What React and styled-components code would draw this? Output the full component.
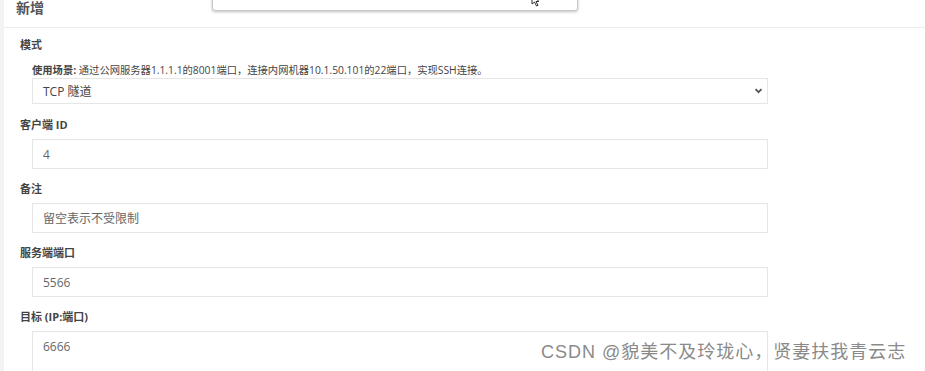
import React from "react";
import styled, { createGlobalStyle } from "styled-components";

const font = `"Open Sans", "Noto Sans CJK SC", sans-serif`;

const Global = createGlobalStyle`
  html, body { margin: 0; padding: 0; background: #fff; }
  body { font-family: ${font}; overflow: hidden; }
`;

const Page = styled.div`
  position: relative;
  width: 925px;
  height: 371px;
  overflow: hidden;
  border-left: 4px solid #f3f3f3;
  box-sizing: border-box;
  background: #fff;
`;

const Header = styled.div`
  height: 27px;
  padding-left: 12px;
  border-bottom: 1px solid #ececec;
  font-size: 14px;
  font-weight: 700;
  line-height: 16px;
  color: #555;
`;

const Form = styled.div`
  padding: 9px 0 0 16px;
`;

const Label = styled.div`
  font-size: 11px;
  font-weight: 700;
  line-height: 16px;
  color: #444;
  margin-bottom: ${(p) => p.$gap || 6}px;
`;

const Hint = styled.div`
  padding-left: 12px;
  font-size: 10.3px;
  line-height: 16px;
  color: #444;
  b { font-weight: 700; }
`;

const Group = styled.div`
  margin-bottom: ${(p) => p.$gap || 12}px;
`;

const Field = styled.div`
  margin-left: 12px;
  width: 736px;
  height: ${(p) => p.$h || 30}px;
  box-sizing: border-box;
  border: 1px solid #e6e6e6;
  padding: ${(p) => (p.$area ? "6px 10px" : "0 4px 0 10px")};
  display: flex;
  align-items: ${(p) => (p.$area ? "flex-start" : "center")};
  justify-content: space-between;
  font-size: 12px;
  color: ${(p) => (p.$dark ? "#444" : "#666")};
`;

const Popup = styled.div`
  position: absolute;
  left: 208px;
  top: -20px;
  width: 364px;
  height: 29px;
  background: #fff;
  border: 1px solid #c8c8c8;
  border-radius: 3px;
  box-shadow: 0 1px 3px rgba(0, 0, 0, 0.25);
`;

const Cursor = styled.svg`
  position: absolute;
  left: 318px;
  top: 14px;
`;

const Watermark = styled.div`
  position: absolute;
  left: 537px;
  top: 340px;
  font-size: 18px;
  letter-spacing: 1px;
  line-height: 24px;
  color: #8a8a8a;
  font-family: "Liberation Sans", "Noto Sans CJK SC", sans-serif;
  text-shadow: 0 0 1px #fff;
  white-space: nowrap;
`;

function Chevron() {
  return (
    <svg width="9" height="6" viewBox="0 0 9 6">
      <path d="M1.5 1.2 L4.5 4.2 L7.5 1.2" fill="none" stroke="#555" strokeWidth="1.8" />
    </svg>
  );
}

export default function App() {
  return (
    <Page>
      <Global />
      <Header>新增</Header>
      <Popup>
        <Cursor width="10" height="12" viewBox="0 0 10 12">
          <path d="M1 0 L1 9 L3.5 7 L5.5 11 L7 10.3 L5 6.5 L8 6.5 Z" fill="#fff" stroke="#333" strokeWidth="1" />
        </Cursor>
      </Popup>
      <Form>
        <Group $gap={13}>
          <Label $gap={9}>模式</Label>
          <Hint>
            <b>使用场景:</b> 通过公网服务器1.1.1.1的8001端口，连接内网机器10.1.50.101的22端口，实现SSH连接。
          </Hint>
          <Field $h={26} $dark>
            <span>TCP 隧道</span>
            <Chevron />
          </Field>
        </Group>
        <Group>
          <Label>客户端 ID</Label>
          <Field>4</Field>
        </Group>
        <Group>
          <Label>备注</Label>
          <Field>留空表示不受限制</Field>
        </Group>
        <Group>
          <Label>服务端端口</Label>
          <Field>5566</Field>
        </Group>
        <Group>
          <Label>目标 (IP:端口)</Label>
          <Field $area $h={60}>6666</Field>
        </Group>
      </Form>
      <Watermark>CSDN @貌美不及玲珑心，贤妻扶我青云志</Watermark>
    </Page>
  );
}
